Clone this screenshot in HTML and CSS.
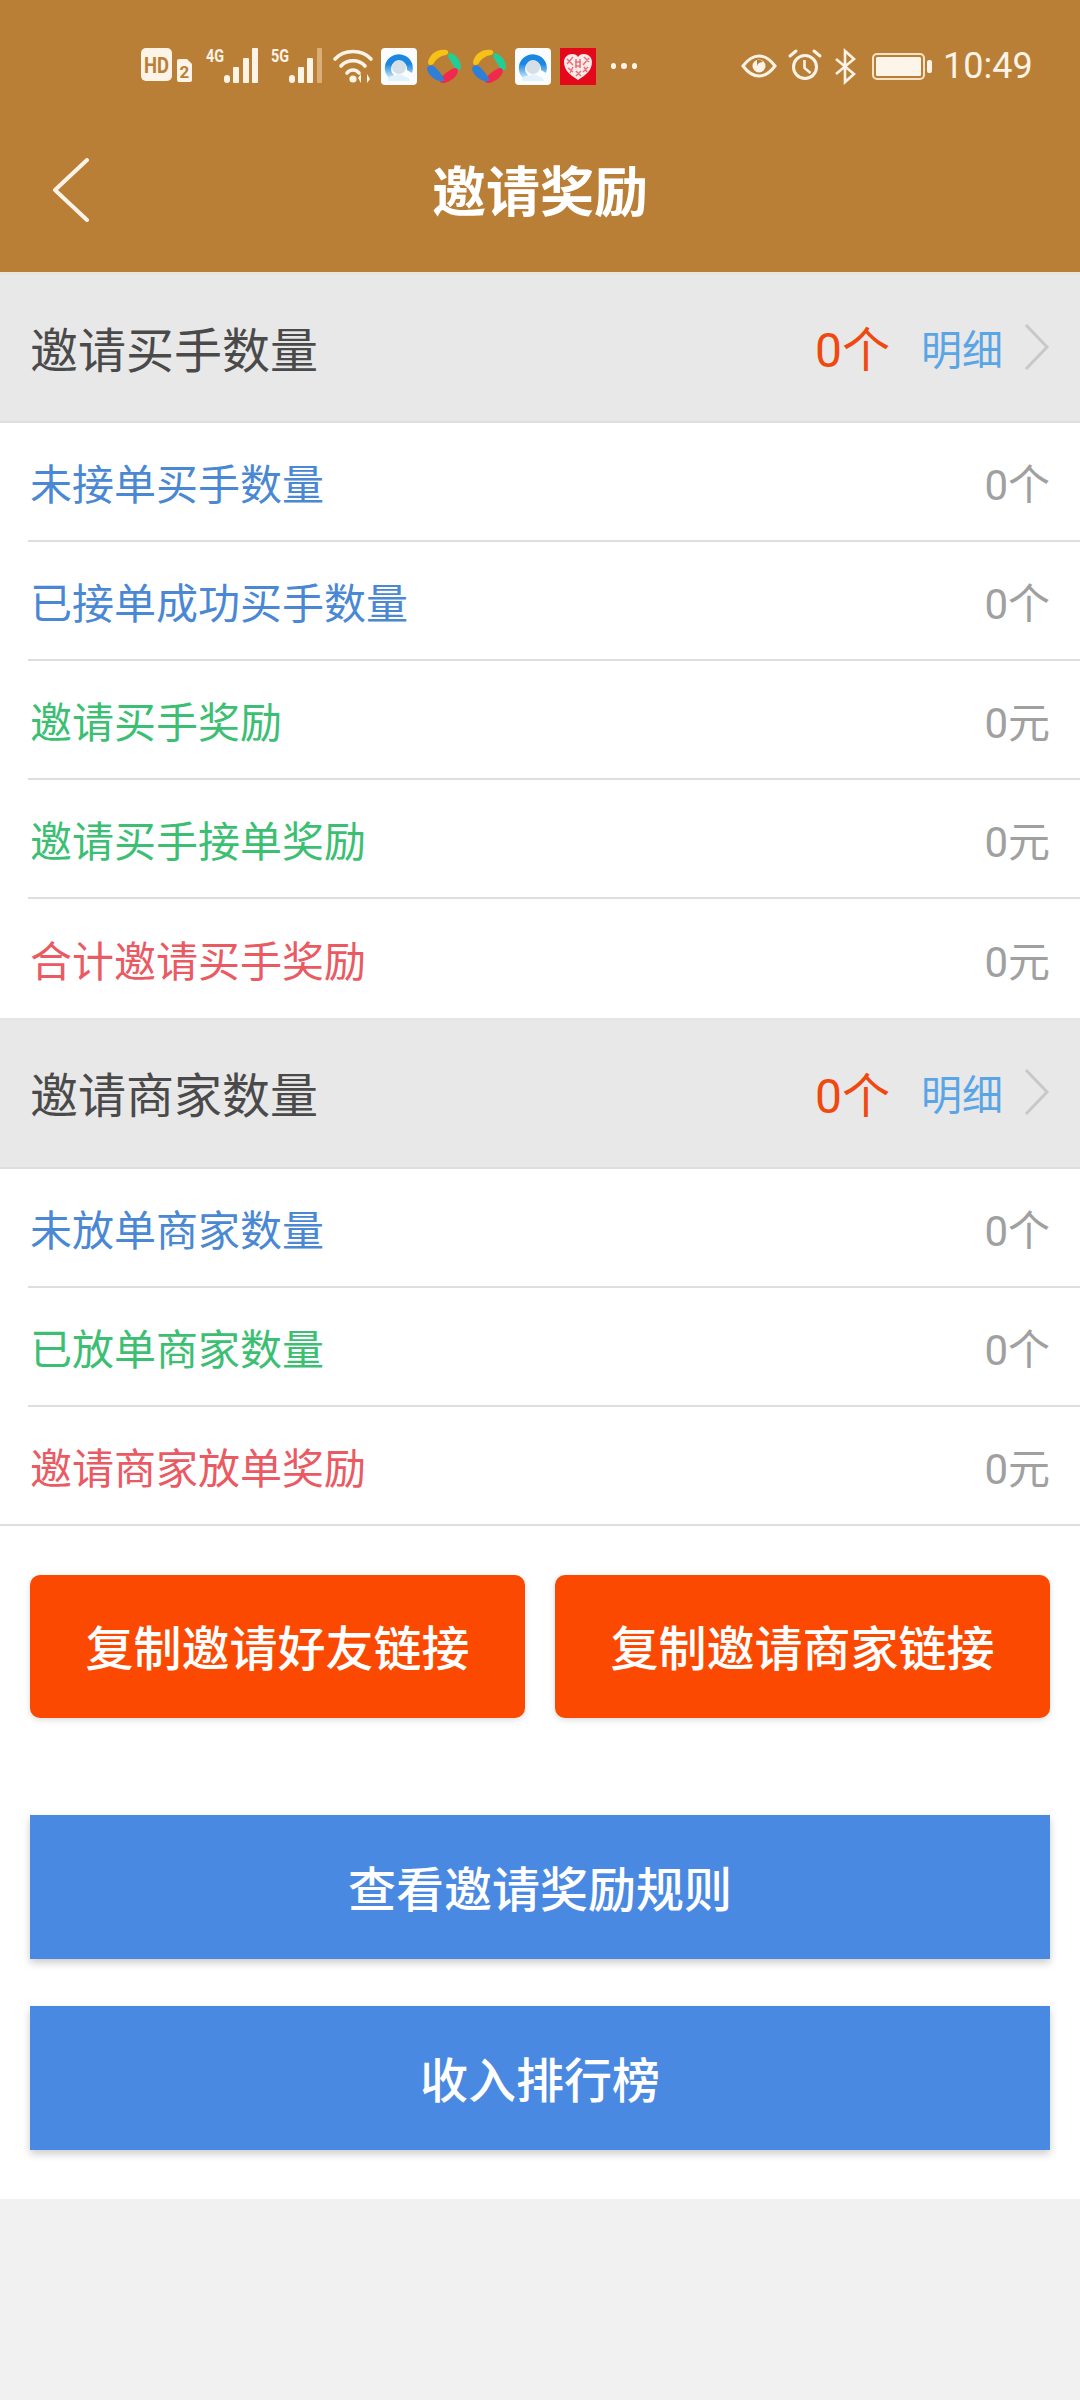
FILE: index.html
```html
<!DOCTYPE html>
<html lang="zh-CN">
<head>
<meta charset="utf-8">
<title>邀请奖励</title>
<link rel="stylesheet" href="styles.css">
</head>
<body>
<header class="app-header">
  <div class="status-bar">
    <svg class="ic" width="52" height="36" viewBox="0 0 52 36">
      <rect x="0" y="0" width="31" height="33" rx="5" fill="#fdf3e6"/>
      <text class="hd" x="15.500" y="24.500" text-anchor="middle" textLength="25" lengthAdjust="spacingAndGlyphs">HD</text>
      <path d="M38 11h8l5 5v16a2 2 0 0 1-2 2H38a2 2 0 0 1-2-2V13a2 2 0 0 1 2-2z" fill="#fdf3e6"/>
      <text class="sim" x="43.500" y="29.500" text-anchor="middle">2</text>
    </svg>
    <svg class="ic sig" width="54" height="36" viewBox="0 0 54 36">
      <text class="net" x="0" y="14" textLength="18" lengthAdjust="spacingAndGlyphs">4G</text>
      <rect x="18" y="27" width="6" height="8" rx="3" fill="#fdf3e6"/>
      <rect x="27" y="19" width="6" height="16" rx="1" fill="#fdf3e6"/>
      <rect x="37" y="10" width="6" height="25" rx="1" fill="#fdf3e6"/>
      <rect x="46" y="0" width="6" height="35" rx="1" fill="#fdf3e6"/>
    </svg>
    <svg class="ic sig2" width="54" height="36" viewBox="0 0 54 36">
      <text class="net" x="0" y="14" textLength="18" lengthAdjust="spacingAndGlyphs">5G</text>
      <rect x="18" y="27" width="6" height="8" rx="3" fill="#fdf3e6"/>
      <rect x="27" y="19" width="6" height="16" rx="1" fill="#fdf3e6"/>
      <rect x="36" y="10" width="6" height="25" rx="1" fill="#fdf3e6"/>
      <rect x="46" y="0" width="5" height="35" rx="1" fill="#dcae77"/>
    </svg>
    <svg class="ic wifi" width="40" height="36" viewBox="0 0 40 36">
      <g fill="none" stroke="#fdf3e6" stroke-width="3.600" stroke-linecap="round">
        <path d="M2 11C11 1 29 1 38 11"/>
        <path d="M8 18C14 11 26 11 32 18"/>
        <path d="M14 25C17 21 23 21 26 25"/>
      </g>
      <circle cx="20" cy="31" r="3.600" fill="#fdf3e6"/>
      <path d="M28 35V26l-3 4zM34 26v9l3-4z" fill="#fdf3e6"/>
    </svg>
    <svg class="ic app" width="36" height="37" viewBox="0 0 36 37">
      <defs>
        <linearGradient id="arcFade" x1="0" y1="0" x2="0" y2="1">
          <stop offset="0.400" stop-color="#1b87e2"/>
          <stop offset="1" stop-color="#d9eefb"/>
        </linearGradient>
      </defs>
      <rect width="36" height="37" rx="4" fill="#fbfcfd"/>
      <path d="M9 31A14 14 0 1 1 31 25l-5-3a8 8 0 1 0-13 5z" fill="url(#arcFade)"/>
      <circle cx="18" cy="19" r="7" fill="#d5dfe6"/>
      <path d="M7 32c0-3 4-5 7-4 3-3 8-2 10 1 3 0 5 2 5 4H9c-1 0-2 0-2-1z" fill="#e3f1fb"/>
    </svg>
    <svg class="ic app2" width="36" height="37" viewBox="0 0 36 37">
      <path d="M2 14C4 6 11 1 20 2c3 0 3 4 0 5-6 1-10 4-12 8-2 3-6 3-6-1z" fill="#f6c218"/>
      <path d="M24 5c6 1 11 8 11 14 0 4-4 4-6 1-3-5-6-9-7-12 0-2 1-3 2-3z" fill="#1fcf97"/>
      <path d="M14 33c0-3 6-9 12-12 3-2 6-1 6 2-1 6-8 11-14 12-2 0-4 0-4-2z" fill="#ef2a4c"/>
      <path d="M1 21c0-4 5-5 8-2 4 4 8 9 9 12 0 3-3 3-5 2C7 31 2 26 1 21z" fill="#2f7fd8"/>
    </svg>
    <svg class="ic app3" width="36" height="37" viewBox="0 0 36 37">
      <path d="M2 14C4 6 11 1 20 2c3 0 3 4 0 5-6 1-10 4-12 8-2 3-6 3-6-1z" fill="#f6c218"/>
      <path d="M24 5c6 1 11 8 11 14 0 4-4 4-6 1-3-5-6-9-7-12 0-2 1-3 2-3z" fill="#1fcf97"/>
      <path d="M14 33c0-3 6-9 12-12 3-2 6-1 6 2-1 6-8 11-14 12-2 0-4 0-4-2z" fill="#ef2a4c"/>
      <path d="M1 21c0-4 5-5 8-2 4 4 8 9 9 12 0 3-3 3-5 2C7 31 2 26 1 21z" fill="#2f7fd8"/>
    </svg>
    <svg class="ic app4" width="36" height="37" viewBox="0 0 36 37">
      <rect width="36" height="37" rx="4" fill="#fbfcfd"/>
      <path d="M9 31A14 14 0 1 1 31 25l-5-3a8 8 0 1 0-13 5z" fill="url(#arcFade)"/>
      <circle cx="18" cy="19" r="7" fill="#d5dfe6"/>
      <path d="M7 32c0-3 4-5 7-4 3-3 8-2 10 1 3 0 5 2 5 4H9c-1 0-2 0-2-1z" fill="#e3f1fb"/>
    </svg>
    <svg class="ic app5" width="36" height="37" viewBox="0 0 36 37">
      <rect width="36" height="37" fill="#e3091b"/>
      <path d="M18 32C10 27 4 22 4 14c0-5 4-8 8-8 3 0 5 1 6 3 1-2 3-3 6-3 4 0 8 3 8 8 0 8-6 13-14 18z" fill="#fbeaea"/>
      <g stroke="#e8737c" stroke-width="1.500" fill="none">
        <path d="M7 11l6 6M13 9l-6 7M15 14h6M15 18h6M16 11v9M20 11v9M24 9l5 5M29 10l-6 7M8 20l5 4M13 19l-3 6M16 23l5 5M21 23l-5 5M24 19l3 5M28 19l-5 5"/>
      </g>
    </svg>
    <div class="more"><i></i><i></i><i></i></div>
    <svg class="ic eye" width="36" height="24" viewBox="0 0 36 24">
      <path d="M2 12C8 4 13 2 18 2s10 2 16 10c-6 8-11 10-16 10S8 20 2 12z" fill="none" stroke="#fdf3e6" stroke-width="3"/>
      <circle cx="18" cy="12" r="6.500" fill="#fdf3e6"/>
      <path d="M16 6a6 6 0 0 1 6 2c-3 0-5 1-6 4z" fill="#ba7f37"/>
    </svg>
    <svg class="ic alarm" width="34" height="31" viewBox="0 0 34 31">
      <circle cx="17" cy="17" r="11.500" fill="none" stroke="#fdf3e6" stroke-width="3"/>
      <path d="M16.500 10v8l6 5" fill="none" stroke="#fdf3e6" stroke-width="2.600"/>
      <path d="M2 6l6-5M32 6l-6-5" stroke="#fdf3e6" stroke-width="3" stroke-linecap="round"/>
    </svg>
    <svg class="ic bt" width="22" height="33" viewBox="0 0 22 33">
      <path d="M2 9l18 15-9 8V1l9 8L2 24" fill="none" stroke="#fdf3e6" stroke-width="2.600"/>
    </svg>
    <svg class="ic batt" width="61" height="27" viewBox="0 0 61 27">
      <rect x="1" y="1" width="51" height="25" rx="4" fill="none" stroke="#f5e3c8" stroke-width="2"/>
      <rect x="4" y="4" width="45" height="19" rx="1.500" fill="#fdf5ea"/>
      <rect x="55" y="7" width="5" height="13" rx="2" fill="#fdf3e6"/>
    </svg>
    <span class="clock">10:49</span>
  </div>
  <nav class="nav-bar">
    <svg class="back" width="38" height="64" viewBox="0 0 38 64">
      <path d="M35 2L3 32l32 30" fill="none" stroke="#fdf3e6" stroke-width="4" stroke-linecap="round" stroke-linejoin="round"/>
    </svg>
    <h1 class="nav-title">邀请奖励</h1>
  </nav>
</header>

<main class="sheet">
  <section class="group">
    <div class="group-head">
      <span class="group-name">邀请买手数量</span>
      <span class="group-total">0个</span>
      <a class="group-link">明细</a>
      <svg class="chev" width="26" height="48" viewBox="0 0 26 48"><path d="M2 2l21 22L2 46" fill="none" stroke="#c8c8c8" stroke-width="3"/></svg>
    </div>
    <div class="row"><span class="blue">未接单买手数量</span><span class="val">0个</span></div>
    <div class="row"><span class="blue">已接单成功买手数量</span><span class="val">0个</span></div>
    <div class="row"><span class="green">邀请买手奖励</span><span class="val">0元</span></div>
    <div class="row"><span class="green">邀请买手接单奖励</span><span class="val">0元</span></div>
    <div class="row last"><span class="red">合计邀请买手奖励</span><span class="val">0元</span></div>
  </section>
  <section class="group">
    <div class="group-head">
      <span class="group-name">邀请商家数量</span>
      <span class="group-total">0个</span>
      <a class="group-link">明细</a>
      <svg class="chev" width="26" height="48" viewBox="0 0 26 48"><path d="M2 2l21 22L2 46" fill="none" stroke="#c8c8c8" stroke-width="3"/></svg>
    </div>
    <div class="row"><span class="blue">未放单商家数量</span><span class="val">0个</span></div>
    <div class="row"><span class="green">已放单商家数量</span><span class="val">0个</span></div>
    <div class="row last"><span class="red">邀请商家放单奖励</span><span class="val">0元</span></div>
  </section>

  <div class="actions">
    <div class="copy-pair">
      <button class="btn copy">复制邀请好友链接</button>
      <button class="btn copy">复制邀请商家链接</button>
    </div>
    <button class="btn wide rules">查看邀请奖励规则</button>
    <button class="btn wide">收入排行榜</button>
  </div>
</main>
</body>
</html>
```

FILE: styles.css
```css
* { box-sizing: border-box; }

html, body {
  margin: 0;
  padding: 0;
}

body {
  min-height: 2400px;
  background: #f1f1f1;
  font-family: Roboto, "Noto Sans CJK SC", sans-serif;
}

/* Header: system bar and title bar */
.app-header {
  height: 273px;
  background: #ba7f37;
  border-bottom: 1px solid #f3e4cf;
}

.status-bar {
  display: flex;
  align-items: center;
  height: 132px;
  padding-left: 141px;
}

.ic { flex: none; display: block; overflow: visible; }
.sig { margin-left: 13px; }
.sig2 { margin-left: 11px; }
.wifi { margin-left: 8px; }
.app { margin-left: 8px; }
.app2 { margin-left: 9px; }
.app3 { margin-left: 9px; }
.app4 { margin-left: 8px; }
.app5 { margin-left: 9px; }
.eye { margin-left: 104px; }
.alarm { margin-left: 11px; margin-top: -1px; }
.bt { margin-left: 12px; }
.batt { margin-left: 16px; }

.hd {
  font: 700 22px Roboto, sans-serif;
  fill: #ba7f37;
}

.sim {
  font: 700 17px Roboto, sans-serif;
  fill: #ba7f37;
}

.net {
  font: 700 19px Roboto, sans-serif;
  fill: #fdf3e6;
}

.more {
  display: flex;
  gap: 5px;
  margin-left: 15px;
  width: 26px;
}

.more i {
  width: 6px;
  height: 6px;
  border-radius: 50%;
  background: #fdf3e6;
}

.clock {
  margin-left: 10px;
  color: #fdf3e6;
  font-size: 36px;
  line-height: 40px;
}

.nav-bar {
  position: relative;
  display: flex;
  align-items: center;
  justify-content: center;
  height: 122px;
  margin-top: 1px;
}

.back {
  position: absolute;
  left: 52px;
  top: 25px;
}

.nav-title {
  margin: 0;
  color: #fff;
  font-size: 54px;
  font-weight: 700;
  line-height: 70px;
}

/* Stat groups */
.sheet { background: #fff; }

.group-head {
  display: flex;
  align-items: center;
  height: 150px;
  padding: 0 30px 3px;
  background: #e8e8e8;
  border-top: 2px solid #e3e6e6;
  border-bottom: 2px solid #dedede;
}

.group + .group .group-head { height: 151px; }

.group-name {
  flex: 1;
  color: #4a4a4a;
  font-size: 48px;
}

.group-total {
  margin-top: -1px;
  color: #f0480f;
  font-size: 48px;
}

.group-link {
  margin-left: 31px;
  color: #5aa5e6;
  font-size: 41px;
}

.chev {
  margin-left: 21px;
}

.row {
  display: flex;
  align-items: center;
  justify-content: space-between;
  height: 119px;
  margin-left: 28px;
  padding: 0 30px 0 2px;
  font-size: 42px;
  border-bottom: 2px solid #dedede;
}

.row.last {
  margin-left: 0;
  padding-left: 30px;
}

.group:first-child .row.last { border-bottom: 0; }

.blue { color: #4a88d4; }
.green { color: #3cbf73; }
.red { color: #ea5a63; }
.val { color: #a0a0a0; }

/* Action buttons */
.actions {
  display: flex;
  flex-direction: column;
  padding: 49px 30px;
}

.copy-pair {
  display: flex;
  gap: 30px;
  margin-bottom: 97px;
}

.btn {
  display: block;
  height: 144px;
  padding: 0 0 3px;
  border: 0;
  color: #fff;
  font-family: inherit;
  font-size: 48px;
  font-weight: 500;
}

.copy {
  flex: 1;
  height: 143px;
  background: #fb4901;
  border-radius: 10px;
  box-shadow: 0 2px 6px rgba(0, 0, 0, 0.14);
}

.wide {
  width: 100%;
  background: #4a89e2;
  box-shadow: 0 4px 8px rgba(0, 0, 0, 0.2);
}

.rules { margin-bottom: 47px; }
```
